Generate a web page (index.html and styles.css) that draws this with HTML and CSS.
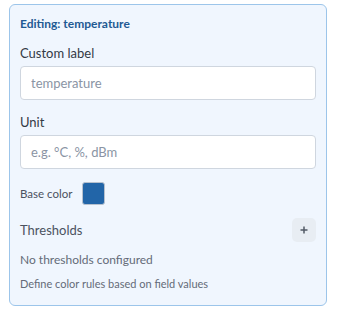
FILE: index.html
```html
<!DOCTYPE html>
<html lang="en">
<head>
    <meta charset="UTF-8">
    <meta name="viewport" content="width=device-width, initial-scale=1.0">
    <title>Field editor</title>
    <link rel="stylesheet" href="styles.css">
</head>
<body>
    <div class="editor">
        <div class="editorTitle">Editing: temperature</div>

        <div class="field">
            <label for="customLabel">Custom label</label>
            <input type="text" id="customLabel" placeholder="temperature">
        </div>

        <div class="field">
            <label for="unit">Unit</label>
            <input type="text" id="unit" placeholder="e.g. °C, %, dBm">
        </div>

        <div class="colorRow">
            <span>Base color</span>
            <div class="swatch"></div>
        </div>

        <div class="thresholdsHead">
            <span>Thresholds</span>
            <button class="addButton" title="Add threshold">
                <svg width="8" height="8" viewBox="0 0 8 8">
                    <path d="M4 0.5V7.5M0.5 4H7.5" stroke="#525a66" stroke-width="1.5" fill="none"/>
                </svg>
            </button>
        </div>

        <div class="emptyMessage">No thresholds configured</div>
        <div class="hint">Define color rules based on field values</div>
    </div>
</body>
</html>
```

FILE: styles.css
```css
body {
    font-family: Lato, "Noto Sans", sans-serif;
    background-color: #ffffff;
    color: #333a45;
    margin: 0;
    padding: 0;
}
.editor {
    box-sizing: border-box;
    width: 318px;
    margin: 4px 0 0 9px;
    padding: 11px 10px 14px 10px;
    background-color: #f0f6fe;
    border: 1px solid #9cc5ea;
    border-radius: 6px;
}
.editorTitle {
    font-size: 12px;
    line-height: 16px;
    font-weight: 700;
    color: #1f5a93;
    margin-bottom: 12px;
}
.field {
    display: flex;
    flex-direction: column;
    gap: 4px;
    margin-bottom: 13px;
}
label {
    font-size: 13px;
    line-height: 18px;
    color: #333a45;
}
input[type="text"] {
    box-sizing: border-box;
    height: 34px;
    padding: 0 10px;
    border: 1px solid #cfd6df;
    border-radius: 4px;
    background-color: #ffffff;
    font-family: Lato, "Noto Sans", sans-serif;
    font-size: 13px;
    color: #333a45;
}
input::placeholder {
    color: #8a94a4;
}
.colorRow {
    display: flex;
    align-items: center;
    gap: 10px;
    font-size: 11.5px;
    color: #4b5260;
    margin-bottom: 13px;
}
.swatch {
    box-sizing: border-box;
    width: 23px;
    height: 23px;
    background-color: #2265a8;
    border: 1px solid #b7c1ce;
    border-radius: 3px;
}
.thresholdsHead {
    display: flex;
    align-items: center;
    justify-content: space-between;
    font-size: 13px;
    color: #4b5260;
    margin-bottom: 10px;
}
.addButton {
    width: 24px;
    height: 24px;
    padding: 0;
    border: none;
    border-radius: 5px;
    background-color: #e8edf3;
    display: flex;
    align-items: center;
    justify-content: center;
    cursor: pointer;
}
.emptyMessage {
    font-size: 12px;
    line-height: 16px;
    color: #646b78;
    margin-bottom: 9px;
}
.hint {
    font-size: 11px;
    line-height: 14px;
    color: #646b78;
}
```
